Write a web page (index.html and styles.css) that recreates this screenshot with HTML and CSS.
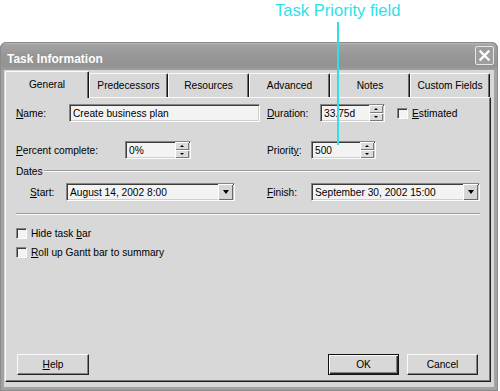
FILE: index.html
```html
<!DOCTYPE html>
<html>
<head>
<meta charset="utf-8">
<title>Task Information</title>
<link rel="stylesheet" href="styles.css">
</head>
<body>
<div class="stage">
  <div class="callout">Task Priority field</div>
  <div class="dialog">
    <div class="titlebar">
      <span class="title">Task Information</span>
      <span class="close"><svg width="13" height="13" viewBox="0 0 13 13"><path d="M2.5 2.5 L10.5 10.5 M10.5 2.5 L2.5 10.5" stroke="#fff" stroke-width="2.3" stroke-linecap="square" fill="none"/></svg></span>
    </div>
    <div class="client">
      <div class="tabs">
        <div class="tab active t-general">General</div>
        <div class="tab t-pred">Predecessors</div>
        <div class="tab t-res">Resources</div>
        <div class="tab t-adv">Advanced</div>
        <div class="tab t-notes">Notes</div>
        <div class="tab t-custom">Custom Fields</div>
      </div>
      <div class="panel">
        <div class="row">
          <div class="col-left">
            <span class="lbl w-name"><u>N</u>ame:</span>
            <div class="field f-name"><span class="val">Create business plan</span></div>
          </div>
          <div class="col-right">
            <span class="lbl w-dur"><u>D</u>uration:</span>
            <div class="field spinbox w65"><span class="val">33.75d</span><span class="spin"><span class="up"></span><span class="down"></span></span></div>
            <span class="check c-est"></span><span class="chk-lbl"><u>E</u>stimated</span>
          </div>
        </div>
        <div class="row r2">
          <div class="col-left">
            <span class="lbl w-pct"><u>P</u>ercent complete:</span>
            <div class="field spinbox w66"><span class="val">0%</span><span class="spin"><span class="up"></span><span class="down"></span></span></div>
          </div>
          <div class="col-right">
            <span class="lbl w-pri">Priorit<u>y</u>:</span>
            <div class="field spinbox w65"><span class="val">500</span><span class="spin"><span class="up"></span><span class="down"></span></span></div>
          </div>
        </div>
        <div class="dates">
          <span class="dates-lbl">Dates</span>
          <span class="etch"></span>
        </div>
        <div class="row r3">
          <div class="col-left">
            <span class="lbl w-start"><u>S</u>tart:</span>
            <div class="field combo"><span class="val">August 14, 2002 8:00</span><span class="drop"></span></div>
          </div>
          <div class="col-right">
            <span class="lbl w-pri"><u>F</u>inish:</span>
            <div class="field combo"><span class="val">September 30, 2002 15:00</span><span class="drop"></span></div>
          </div>
        </div>
        <div class="sep"></div>
        <div class="cb-row first"><span class="check"></span><span class="chk-lbl">Hide task <u>b</u>ar</span></div>
        <div class="cb-row"><span class="check"></span><span class="chk-lbl"><u>R</u>oll up Gantt bar to summary</span></div>
        <div class="buttons">
          <div class="btn b-help"><u>H</u>elp</div>
          <div class="btn-group">
            <div class="btn default">OK</div>
            <div class="btn">Cancel</div>
          </div>
        </div>
      </div>
    </div>
  </div>
  <div class="pointer"></div>
</div>
</body>
</html>
```

FILE: styles.css
```css
* { box-sizing: border-box; }
html, body { margin: 0; padding: 0; background: #fff; }
body {
  width: 500px;
  height: 391px;
  overflow: hidden;
  font-family: "Liberation Sans", Arial, sans-serif;
  font-size: 10.2px;
  color: #000;
}
u { text-decoration: underline; text-underline-offset: 1px; }

.stage { position: relative; width: 500px; height: 391px; }

.callout {
  height: 42px;
  padding: 1px 0 0 275px;
  font-size: 16.6px;
  line-height: 20px;
  color: #30dfe8;
  white-space: nowrap;
}
.pointer {
  position: absolute;
  left: 337px;
  top: 22px;
  width: 2px;
  height: 123px;
  background: #30dfe8;
}

.dialog {
  width: 498px;
  height: 349px;
  background: #a3a3a3;
  border-radius: 7px 7px 0 0;
  padding: 0 4px 4px;
  display: flex;
  flex-direction: column;
  box-shadow: inset 1px 0 0 #8c8c8c, inset -1px 0 0 #8c8c8c, inset 0 -1px 0 #8c8c8c;
}

.titlebar {
  height: 28px;
  margin: 0 -4px;
  padding: 0 4px 0 7px;
  border-radius: 7px 7px 0 0;
  background: linear-gradient(#c4c4c4 0, #a2a2a2 3px, #969696 14px, #939393 24px, #9d9d9d 28px);
  box-shadow: inset 0 1px 0 #8a8a8a, inset 1px 0 0 #8c8c8c, inset -1px 0 0 #8c8c8c;
  display: flex;
  align-items: center;
  justify-content: space-between;
}
.title {
  padding-top: 5px;
  font-size: 12px;
  font-weight: bold;
  color: #fff;
  text-shadow: 0 0 1px #8a8a8a;
  white-space: nowrap;
}
.close {
  width: 19px;
  height: 19px;
  margin-top: -1px;
  border: 1px solid #e6e6e6;
  border-radius: 2px;
  background: #9e9e9e;
  display: flex;
  align-items: center;
  justify-content: center;
}

.client {
  flex: 1;
  background: #d8d8d8;
  padding: 1px 3px 5px 1px;
  display: flex;
  flex-direction: column;
}

.tabs {
  height: 26px;
  display: flex;
  align-items: flex-end;
}
.tab {
  height: 24px;
  border-top: 1px solid #fbfbfb;
  border-left: 1px solid #fbfbfb;
  border-right: 1px solid #141414;
  box-shadow: inset -1px 0 0 #6e6e6e;
  border-radius: 2px 2px 0 0;
  background: #d8d8d8;
  display: flex;
  align-items: center;
  justify-content: center;
  padding-bottom: 1px;
  white-space: nowrap;
}
.tab.active {
  height: 27px;
  margin-bottom: -1px;
  padding-bottom: 2px;
  position: relative;
  z-index: 1;
}
.t-general { width: 84px; }
.t-pred { width: 79px; }
.t-res { width: 81px; }
.t-adv { width: 81px; }
.t-notes { width: 80px; }
.t-custom { width: 80px; }

.panel {
  flex: 1;
  border: 1px solid;
  border-color: #fbfbfb #1e1e1e #1e1e1e #fbfbfb;
  box-shadow: inset -1px -1px 0 #7a7a7a;
  padding: 6px 10px 6px 10px;
  display: flex;
  flex-direction: column;
}

.row { display: flex; align-items: center; height: 18px; }
.r2 { margin-top: 19px; }
.r3 { margin-top: 6px; }
.col-left { width: 251px; display: flex; align-items: center; }
.col-right { flex: 1; display: flex; align-items: center; }

.lbl { white-space: nowrap; flex: none; }
.w-name { width: 53px; }
.w-dur { width: 53px; }
.w-pct { width: 109px; }
.w-pri { width: 44px; }
.w-start { width: 36px; margin-left: 14px; }

.field {
  height: 18px;
  border: 1px solid;
  border-color: #858585 #fdfdfd #fdfdfd #858585;
  box-shadow: inset 1px 1px 0 #3c3c3c, inset -1px -1px 0 #cfcfcf;
  background: #f3f3f3;
  display: flex;
  align-items: center;
  flex: none;
}
.val { flex: 1; padding-left: 3px; white-space: nowrap; overflow: hidden; }
.f-name { width: 191px; }
.w65 { width: 65px; }
.w66 { width: 66px; }

.spin {
  width: 14px;
  height: 16px;
  display: flex;
  flex-direction: column;
  flex: none;
  margin-right: 1px;
}
.spin .up, .spin .down {
  flex: 1;
  background: #dcdcdc;
  box-shadow: inset 1px 1px 0 #fff, inset -1px -1px 0 #7a7a7a;
  display: flex;
  align-items: center;
  justify-content: center;
}
.spin .up::before {
  content: "";
  border-left: 2px solid transparent;
  border-right: 2px solid transparent;
  border-bottom: 2px solid #000;
}
.spin .down::before {
  content: "";
  border-left: 2px solid transparent;
  border-right: 2px solid transparent;
  border-top: 2px solid #000;
}

.combo { width: 169px; }
.drop {
  width: 15px;
  height: 16px;
  margin-right: 1px;
  flex: none;
  background: #d6d6d6;
  box-shadow: inset 1px 1px 0 #fff, inset -1px -1px 0 #6a6a6a;
  display: flex;
  align-items: center;
  justify-content: center;
}
.drop::before {
  content: "";
  border-left: 3.5px solid transparent;
  border-right: 3.5px solid transparent;
  border-top: 4px solid #000;
}

.check {
  width: 11px;
  height: 11px;
  flex: none;
  border: 1px solid;
  border-color: #858585 #fdfdfd #fdfdfd #858585;
  box-shadow: inset 1px 1px 0 #3c3c3c;
  background: #f3f3f3;
}
.c-est { margin-left: 12px; }
.chk-lbl { margin-left: 4px; white-space: nowrap; }

.dates {
  margin-top: 6px;
  height: 12px;
  display: flex;
  align-items: center;
}
.dates-lbl { width: 28px; flex: none; }
.etch {
  flex: 1;
  height: 2px;
  border-top: 1px solid #9a9a9a;
  border-bottom: 1px solid #fbfbfb;
}

.sep {
  margin-top: 12px;
  height: 2px;
  border-top: 1px solid #9a9a9a;
  border-bottom: 1px solid #fbfbfb;
}

.cb-row {
  height: 14px;
  margin-top: 5px;
  display: flex;
  align-items: center;
}
.cb-row.first { margin-top: 11px; }

.buttons {
  margin-top: auto;
  display: flex;
  justify-content: space-between;
  align-items: center;
}
.btn-group { display: flex; gap: 8px; margin-right: 2px; }
.btn {
  width: 71px;
  height: 21px;
  border: 1px solid;
  border-color: #fbfbfb #262626 #262626 #fbfbfb;
  box-shadow: inset -1px -1px 0 #838383;
  background: #d8d8d8;
  display: flex;
  align-items: center;
  justify-content: center;
  white-space: nowrap;
}
.b-help { width: 72px; margin-left: 1px; }
.btn.default {
  border-color: #111;
  box-shadow: inset 1px 1px 0 #fbfbfb, inset -1px -1px 0 #262626, inset -2px -2px 0 #838383;
}
```
